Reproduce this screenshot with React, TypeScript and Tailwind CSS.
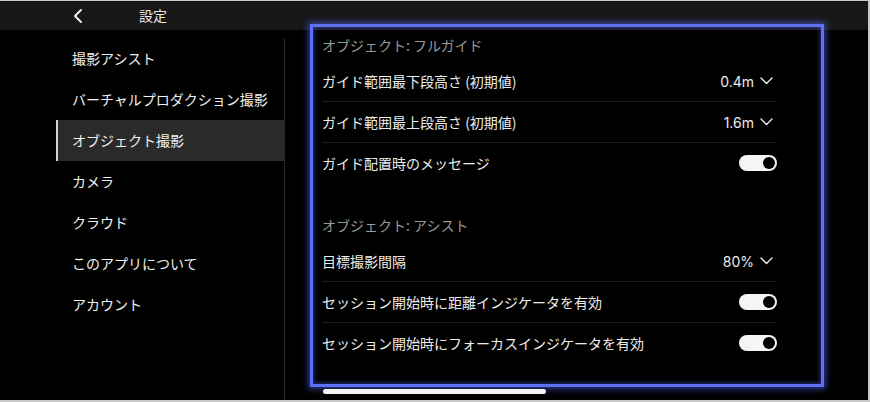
import React from "react";

const jp = { fontFamily: '"Noto Sans CJK JP", "Noto Sans", sans-serif' };

function Chevron() {
  return (
    <svg width="13" height="8" viewBox="0 0 13 8" className="ml-[6px]">
      <polyline points="1,1 6.5,6.5 12,1" fill="none" stroke="#f0f0f0" strokeWidth="1.4" strokeLinecap="round" strokeLinejoin="round" />
    </svg>
  );
}

function Toggle() {
  return (
    <div className="w-[38px] h-[16px] rounded-full bg-[#f5f5f5] flex items-center justify-end pr-[2px]">
      <div className="w-[12px] h-[12px] rounded-full bg-black" />
    </div>
  );
}

function Value({ v }: { v: string }) {
  return (
    <div className="flex items-center pr-[4px]">
      <span className="text-[14px] text-[#ececec]" style={{ fontFamily: 'Inter, "Liberation Sans", sans-serif' }}>{v}</span>
      <Chevron />
    </div>
  );
}

type Row = { label: string; right: "toggle" | string };

function Section({ title, rows }: { title: string; rows: Row[] }) {
  return (
    <div>
      <div className="h-[31px] flex items-center text-[14px] text-[#9a9a9a]">{title}</div>
      {rows.map((r, i) => (
        <div
          key={i}
          className={
            i < rows.length - 1
              ? "h-[41px] flex items-center justify-between border-b border-[#1f1f1f]"
              : "h-[40px] flex items-center justify-between"
          }
        >
          <span className="text-[14px] text-[#ececec]">{r.label}</span>
          {r.right === "toggle" ? <Toggle /> : <Value v={r.right} />}
        </div>
      ))}
    </div>
  );
}

export default function App() {
  const items = [
    "撮影アシスト",
    "バーチャルプロダクション撮影",
    "オブジェクト撮影",
    "カメラ",
    "クラウド",
    "このアプリについて",
    "アカウント",
  ];
  return (
    <div
      className="relative w-[870px] h-[402px] bg-black overflow-hidden border-t border-r-2 border-b-2 border-[#c9c9c9] flex flex-col"
      style={jp}
    >
      <div className="h-[29px] shrink-0 bg-[#171717] flex items-center">
        <svg width="14" height="16" viewBox="0 0 14 16" className="ml-[71px]">
          <polyline points="10,2 4,8 10,14" fill="none" stroke="#f2f2f2" strokeWidth="2" strokeLinecap="round" strokeLinejoin="round" />
        </svg>
        <span className="ml-[54px] text-[14px] text-[#ececec]">設定</span>
      </div>
      <div className="flex flex-1 min-h-0">
        <div className="w-[285px] shrink-0 pl-[56px] pt-[8px] flex">
          <div className="flex-1 border-r border-[#2c2c2c]">
            {items.map((it, i) => (
              <div
                key={i}
                className={
                  i === 2
                    ? "h-[41px] flex items-center pl-[14px] border-l-2 border-[#d2d2d2] bg-[#2a2a2a] text-[14px] text-[#f0f0f0]"
                    : "h-[41px] flex items-center pl-[14px] border-l-2 border-transparent text-[14px] text-[#f0f0f0]"
                }
              >
                {it}
              </div>
            ))}
          </div>
        </div>
        <div className="flex-1 pl-[37px]">
          <div className="w-[455px]">
            <Section
              title="オブジェクト: フルガイド"
              rows={[
                { label: "ガイド範囲最下段高さ (初期値)", right: "0.4m" },
                { label: "ガイド範囲最上段高さ (初期値)", right: "1.6m" },
                { label: "ガイド配置時のメッセージ", right: "toggle" },
              ]}
            />
            <div className="h-[27px]" />
            <Section
              title="オブジェクト: アシスト"
              rows={[
                { label: "目標撮影間隔", right: "80%" },
                { label: "セッション開始時に距離インジケータを有効", right: "toggle" },
                { label: "セッション開始時にフォーカスインジケータを有効", right: "toggle" },
              ]}
            />
          </div>
        </div>
      </div>
      {/* highlight overlay */}
      <div className="absolute left-[310px] top-[23px] w-[514px] h-[363px] border-[3px] border-[#5d6ff3] shadow-[0_0_6px_2px_rgba(80,96,240,0.6),inset_0_0_4px_1px_rgba(80,96,240,0.5)] pointer-events-none" />
      {/* scroll indicator */}
      <div className="absolute left-[323px] top-[388px] w-[223px] h-[5px] rounded-full bg-[#f4f4f4]" />
    </div>
  );
}
